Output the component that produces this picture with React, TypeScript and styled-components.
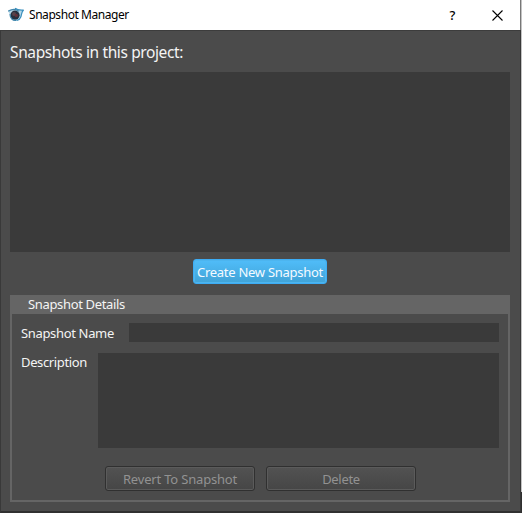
import React from "react";
import styled, { createGlobalStyle } from "styled-components";

const GlobalStyle = createGlobalStyle`
  body { margin: 0; background: #303030; overflow: hidden; }
  * { box-sizing: border-box; }
`;

const Screen = styled.div`
  display: flex;
  width: 522px;
  height: 513px;
  background: #303030;
`;

const Window = styled.main`
  display: flex;
  flex-direction: column;
  width: 521px;
  height: 513px;
  font-family: "Noto Sans", "Open Sans", sans-serif;
  color: #f4f4f4;
`;

const Backdrop = styled.div`
  width: 1px;
  height: 492px;
  background: #c3c3c3;
`;

const TitleBar = styled.header`
  display: flex;
  align-items: center;
  height: 30px;
  padding: 0 17px 0 8px;
  background: #fff;
  color: #000;
  border-right: 1px solid #777;
`;

const Text = styled.span<{ $size?: number; $spacing?: number }>`
  font-size: ${(p) => p.$size ?? 13}px;
  letter-spacing: ${(p) => p.$spacing ?? -0.3}px;
  line-height: 18px;
  white-space: nowrap;
`;

const Title = styled(Text)`
  flex: 1;
  margin-left: 5px;
`;

const HelpMark = styled(Text)`
  margin-right: 37px;
  padding-bottom: 1px;
  font-weight: 500;
`;

const Content = styled.section`
  display: flex;
  flex-direction: column;
  height: 483px;
  padding: 12px 10px 9px 9px;
  background: #4b4b4b;
  border: 1px solid #393939;
  border-bottom: 2px solid #303030;
  border-top-color: #3c3c3c;
`;

const Heading = styled(Text)`
  height: 29px;
`;

const SnapshotList = styled.div`
  height: 180px;
  flex: none;
  background: #3a3a3a;
`;

const Button = styled.button<{ $primary?: boolean }>`
  display: flex;
  align-items: center;
  justify-content: center;
  width: ${(p) => (p.$primary ? 134 : 150)}px;
  height: 25px;
  padding: 0;
  font-family: inherit;
  color: ${(p) => (p.$primary ? "#f4faff" : "#929292")};
  background: ${(p) =>
    p.$primary
      ? "linear-gradient(#50bdf9, #41a3d7)"
      : "linear-gradient(#525252, #464646)"};
  border: 1px solid ${(p) => (p.$primary ? "#3dadf5" : "#303030")};
  border-radius: 3px;
  box-shadow: inset 0 0 0 1px ${(p) => (p.$primary ? "#4db5ef" : "#5b5b5b")};
`;

const CreateRow = styled.div`
  display: flex;
  justify-content: center;
  padding: 7px 0 11px;
`;

const Details = styled.section`
  display: flex;
  flex-direction: column;
  height: 207px;
  border: 2px solid #656565;
  border-top: 0;
`;

const DetailsHeader = styled.div`
  height: 19px;
  flex: none;
  padding: 0 0 1px 16px;
  display: flex;
  align-items: center;
  background: #656565;
`;

const FieldRow = styled.label<{ $top: number; $height: number }>`
  display: flex;
  justify-content: space-between;
  margin-top: ${(p) => p.$top}px;
  height: ${(p) => p.$height}px;
  padding: 0 9px;
`;

const FieldLabel = styled(Text)<{ $inset?: number }>`
  padding-top: ${(p) => p.$inset ?? 0}px;
`;

const NameInput = styled.input`
  width: 370px;
  height: 19px;
  border: 0;
  background: #3a3a3a;
`;

const DescriptionInput = styled.textarea`
  width: 401px;
  height: 95px;
  border: 0;
  resize: none;
  background: #3a3a3a;
`;

const Actions = styled.div`
  display: flex;
  gap: 11px;
  padding: 18px 0 0 93px;
`;

const AppIcon = () => (
  <svg width="16" height="16" viewBox="0 0 16 16" fill="none">
    <path d="M.2 4.2C3 2.5 7 1.6 10.4 3.1L15.6 3.4C14 5.2 13.6 7 13.2 9c-.7 3.2-3.2 5-6.3 4.8C3.7 13.3 1.8 10.8 1.8 7.6Z" fill="#b7d9ea" />
    <circle cx="7" cy="8.2" r="4.6" fill="#26313f" />
    <circle cx="6" cy="7" r="2" fill="#59434b" />
    <circle cx="8.3" cy="8.4" r="1.6" fill="#633039" />
    <path d="M.2 4.2C3.5 2.2 8 1.8 11 4.4M2.1 7c-.3 4.2 2.8 7 6.3 6.2" stroke="#4387ac" strokeWidth="1.2" />
    <path d="M7 1.3c1.8 1.5 4.9 2.2 8.7 1.8-2.3 1.5-2 4.2-2.8 6.6-.7 2-2.1 3.2-4.1 3.7" stroke="#398fbd" strokeWidth="1.2" />
  </svg>
);

const CloseIcon = () => (
  <svg width="11" height="11" viewBox="0 0 11 11" stroke="#000" strokeWidth="1.1">
    <path d="m.5.5 10 10m0-10-10 10" />
  </svg>
);

export default function App() {
  return (
    <>
      <GlobalStyle />
      <Screen>
        <Window>
          <TitleBar>
            <AppIcon />
            <Title $size={12} $spacing={-0.44}>Snapshot Manager</Title>
            <HelpMark $size={13}>?</HelpMark>
            <CloseIcon />
          </TitleBar>
          <Content>
            <Heading $size={15.5} $spacing={-0.38}>Snapshots in this project:</Heading>
            <SnapshotList />
            <CreateRow>
              <Button $primary><Text $spacing={-0.27}>Create New Snapshot</Text></Button>
            </CreateRow>
            <Details>
              <DetailsHeader><Text $spacing={-0.34}>Snapshot Details</Text></DetailsHeader>
              <FieldRow $top={9} $height={19}>
                <FieldLabel $inset={1} $spacing={-0.34}>Snapshot Name</FieldLabel>
                <NameInput />
              </FieldRow>
              <FieldRow $top={11} $height={95}>
                <FieldLabel $spacing={-0.36}>Description</FieldLabel>
                <DescriptionInput />
              </FieldRow>
              <Actions>
                <Button disabled><Text $spacing={-0.18}>Revert To Snapshot</Text></Button>
                <Button disabled><Text>Delete</Text></Button>
              </Actions>
            </Details>
          </Content>
        </Window>
        <Backdrop />
      </Screen>
    </>
  );
}
